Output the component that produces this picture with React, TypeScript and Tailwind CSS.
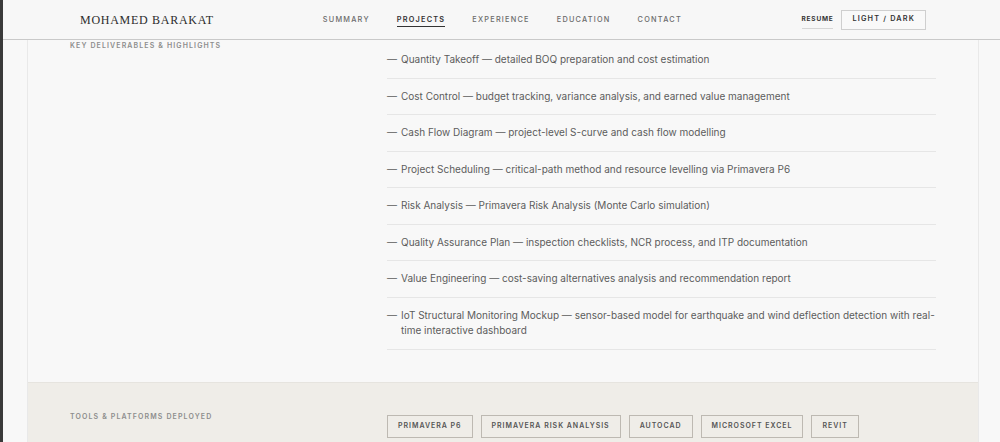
import { Fragment } from "react";

const navLinks = ["Summary", "Projects", "Experience", "Education", "Contact"];

const highlights = [
  "Quantity Takeoff — detailed BOQ preparation and cost estimation",
  "Cost Control — budget tracking, variance analysis, and earned value management",
  "Cash Flow Diagram — project-level S-curve and cash flow modelling",
  "Project Scheduling — critical-path method and resource levelling via Primavera P6",
  "Risk Analysis — Primavera Risk Analysis (Monte Carlo simulation)",
  "Quality Assurance Plan — inspection checklists, NCR process, and ITP documentation",
  "Value Engineering — cost-saving alternatives analysis and recommendation report",
  "IoT Structural Monitoring Mockup — sensor-based model for earthquake and wind deflection detection with real-time interactive dashboard",
];

const tools = [
  "Primavera P6",
  "Primavera Risk Analysis",
  "AutoCAD",
  "Microsoft Excel",
  "Revit",
];

function Header() {
  return (
    <header className="h-[40px] shrink-0 border-b border-[#c9c9c9] bg-[#f7f7f7] flex items-center">
      <div className="ml-[77px] font-['Liberation_Serif',serif] text-[12px] tracking-[0.06em] text-[#2c2c2c]">
        MOHAMED BARAKAT
      </div>
      <nav className="ml-[109px] mt-[1px] flex items-center gap-[27px]">
        {navLinks.map((link) => (
          <a
            key={link}
            className={
              link === "Projects"
                ? "text-[7.3px] uppercase tracking-[0.17em] font-semibold text-[#333] border-b border-[#333] pb-[1px] mt-[2px]"
                : "text-[7.3px] uppercase tracking-[0.17em] font-medium text-[#6b6b6b]"
            }
          >
            {link}
          </a>
        ))}
      </nav>
      <div className="ml-auto mr-[74px] flex items-center gap-[8px]">
        <a className="text-[6.5px] uppercase tracking-[0.12em] font-bold text-[#333] border-b border-[#d6d6d6] pb-[4px] mt-[5px]">
          Resume
        </a>
        <button className="h-[20px] px-[10px] border border-[#cfcfcf] bg-[#f9f9f9] text-[7.3px] uppercase tracking-[0.16em] font-semibold text-[#333]">
          Light / Dark
        </button>
      </div>
    </header>
  );
}

function SectionLabel({ children }: { children: string }) {
  return (
    <div className="text-[7px] leading-[10px] uppercase tracking-[0.16em] font-semibold text-[#8d8d8d]">
      {children}
    </div>
  );
}

export default function App() {
  return (
    <div className="min-h-screen flex bg-[#f8f8f8] font-['Inter',sans-serif] overflow-hidden">
      <div className="w-[3px] shrink-0 bg-[#3a3a3a]" />
      <div className="flex-1 flex flex-col h-[442px]">
        <Header />
        <main className="flex-1 ml-[24px] mr-[21px] border-x border-[#e9e9e9] bg-[#f8f8f8] flex flex-col">
          <section className="grid grid-cols-[317px_1fr] px-[42px] pb-[32px]">
            <div className="pt-[1px]">
              <SectionLabel>Key Deliverables &amp; Highlights</SectionLabel>
            </div>
            <ul className="pt-[2px]">
              {highlights.map((item) => (
                <li
                  key={item}
                  className="flex gap-[4px] py-[10px] border-b border-[#e6e6e6] text-[10px] leading-[15.5px] text-[#5c5c5c]"
                >
                  <span className="shrink-0">—</span>
                  <span>
                    {item.split(" — ").map((part, i) => (
                      <Fragment key={i}>
                        {i > 0 && " — "}
                        {part}
                      </Fragment>
                    ))}
                  </span>
                </li>
              ))}
            </ul>
          </section>
          <section className="flex-1 bg-[#efede8] border-t border-[#e6e4df] grid grid-cols-[317px_1fr] px-[42px] pt-[31px]">
            <div className="-mt-[2px]">
              <SectionLabel>Tools &amp; Platforms Deployed</SectionLabel>
            </div>
            <div className="flex flex-wrap gap-[8px] h-fit mt-[1px]">
              {tools.map((tool) => (
                <span
                  key={tool}
                  className="h-[23px] px-[10px] flex items-center border border-[#bdb9b2] text-[7px] uppercase tracking-[0.14em] font-semibold text-[#555]"
                >
                  {tool}
                </span>
              ))}
            </div>
          </section>
        </main>
      </div>
    </div>
  );
}
